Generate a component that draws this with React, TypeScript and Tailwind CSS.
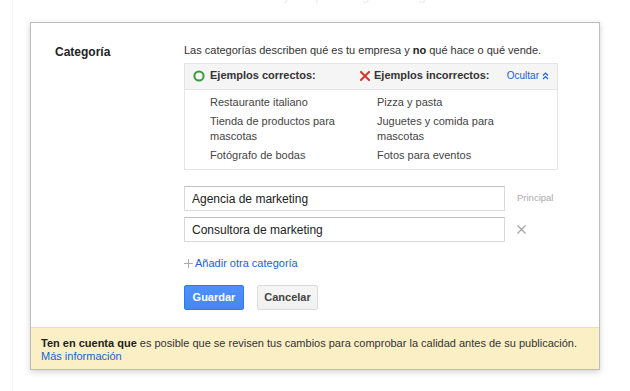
import React from "react";

const font = { fontFamily: '"Liberation Sans", Arial, sans-serif' };

function GreenCircle() {
  return (
    <svg width="12" height="12" viewBox="0 0 12 12" className="mr-[5px] shrink-0">
      <circle cx="6" cy="6" r="4.6" fill="none" stroke="#3a9a37" strokeWidth="2" />
    </svg>
  );
}

function RedCross() {
  return (
    <svg width="10" height="10" viewBox="0 0 10 10" className="mr-[4px] shrink-0">
      <path d="M1 1 L9 9 M9 1 L1 9" stroke="#d9362b" strokeWidth="2" strokeLinecap="square" />
    </svg>
  );
}

function Chevrons() {
  return (
    <svg width="7" height="8" viewBox="0 0 7 8" className="ml-[3px]">
      <path d="M1 3.5 L3.5 1 L6 3.5 M1 7 L3.5 4.5 L6 7" fill="none" stroke="#1a5fd6" strokeWidth="1.1" />
    </svg>
  );
}

const good = ["Restaurante italiano", "Tienda de productos para mascotas", "Fotógrafo de bodas"];
const bad = ["Pizza y pasta", "Juguetes y comida para mascotas", "Fotos para eventos"];

export default function App() {
  return (
    <div className="h-[391px] w-[630px] overflow-hidden bg-white pl-[12px]" style={font}>
      <div className="h-full border-l border-[#f4f4f4] pl-[17px]">
        {/* faded heading of the page behind the dialog, mostly scrolled away */}
        <div className="h-[22px] overflow-hidden pl-[245px]">
          <div className="-mt-[12px] text-[13px] leading-[16px] text-[#ececec]">Ayuda para elegir la categoría</div>
        </div>

        <div className="w-[570px] border border-[#bdbdbd] bg-white shadow-[0_2px_6px_rgba(0,0,0,0.18)]">
          <div className="flex pl-[24px] pt-[19px] pb-[17px]">
            <div className="mt-[2px] w-[129px] shrink-0 text-[12px] font-bold leading-[16px] text-[#222]">
              Categoría
            </div>

            <div className="flex flex-col">
              <p className="text-[11px] leading-[16px] text-[#333]">
                Las categorías describen qué es tu empresa y <b className="text-[#222]">no</b> qué hace o qué vende.
              </p>

              <div className="mt-[5px] w-[374px] border border-[#e5e5e5]">
                <div className="grid h-[26px] grid-cols-[167px_1fr] items-center border-b border-[#e5e5e5] bg-[#f5f5f5] pb-[2px] pl-[8px] pr-[8px] text-[11px] font-bold text-[#333]">
                  <div className="flex items-center">
                    <GreenCircle />
                    Ejemplos correctos:
                  </div>
                  <div className="flex items-center">
                    <RedCross />
                    Ejemplos incorrectos:
                    <span className="ml-auto flex items-center text-[10px] font-normal text-[#1a5fd6]">
                      Ocultar
                      <Chevrons />
                    </span>
                  </div>
                </div>

                <div className="grid grid-cols-[167px_1fr] gap-y-[4px] pl-[25px] pt-[5px] pb-[6px] text-[11px] leading-[15px] text-[#444]">
                  {good.map((g, i) => (
                    <React.Fragment key={g}>
                      <div className="max-w-[130px]">{g}</div>
                      <div className="max-w-[130px]">{bad[i]}</div>
                    </React.Fragment>
                  ))}
                </div>
              </div>

              <div className="mt-[16px] flex items-center">
                <div className="flex h-[25px] w-[321px] items-center border border-[#d9d9d9] border-t-[#c0c0c0] pl-[7px] text-[12px] text-[#222]">
                  Agencia de marketing
                </div>
                <span className="ml-[12px] text-[9.5px] text-[#aaa]">Principal</span>
              </div>

              <div className="mt-[6px] flex items-center">
                <div className="flex h-[25px] w-[321px] items-center border border-[#d9d9d9] border-t-[#c0c0c0] pl-[7px] text-[12px] text-[#222]">
                  Consultora de marketing
                </div>
                <svg width="9" height="9" viewBox="0 0 9 9" className="ml-[12px]">
                  <path d="M0.5 0.5 L8.5 8.5 M8.5 0.5 L0.5 8.5" stroke="#a3a3a3" strokeWidth="1.2" />
                </svg>
              </div>

              <div className="mt-[14px] flex items-center text-[11px] leading-[15px]">
                <svg width="9" height="9" viewBox="0 0 9 9" className="mr-[2px]">
                  <path d="M4.5 0 V9 M0 4.5 H9" stroke="#aaa" strokeWidth="1" />
                </svg>
                <span className="text-[#1a5fd6]">Añadir otra categoría</span>
              </div>

              <div className="mt-[14px] flex gap-[13px]">
                <button className="h-[25px] w-[60px] rounded-[2px] border border-[#3079ed] bg-gradient-to-b from-[#4d90fe] to-[#4787ed] text-[11px] font-bold text-white">
                  Guardar
                </button>
                <button className="h-[25px] w-[61px] rounded-[2px] border border-[#dcdcdc] bg-gradient-to-b from-[#f5f5f5] to-[#f1f1f1] text-[11px] font-bold text-[#444]">
                  Cancelar
                </button>
              </div>
            </div>
          </div>

          <div className="border-t border-[#e9dfb6] bg-[#fbefc6] pl-[10px] pt-[9px] pb-[6px] text-[11px] leading-[13px] text-[#333]">
            <b className="text-[#222]">Ten en cuenta que</b> es posible que se revisen tus cambios para comprobar la calidad antes de su publicación.
            <br />
            <span className="text-[#1a5fd6]">Más información</span>
          </div>
        </div>
      </div>
    </div>
  );
}
